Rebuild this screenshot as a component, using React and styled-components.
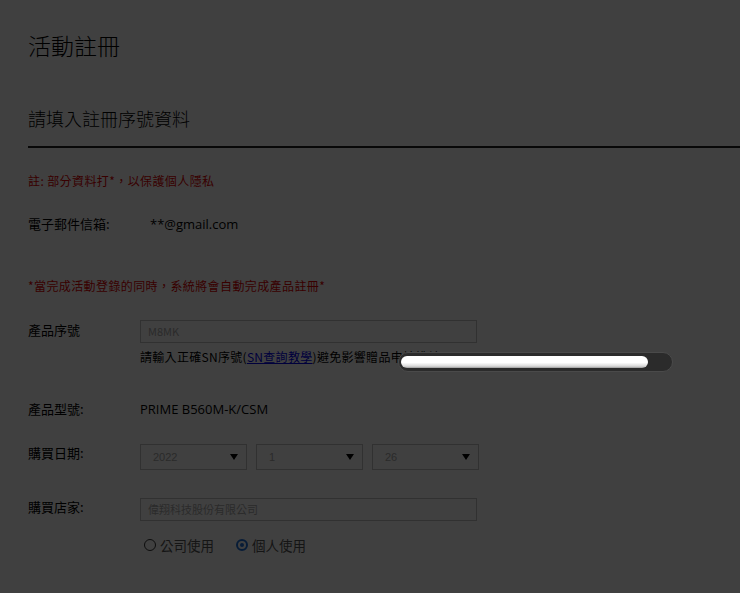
import React from "react";
import styled, { createGlobalStyle } from "styled-components";

const GlobalStyle = createGlobalStyle`
    html, body {
        margin: 0;
        padding: 0;
        background: #ffffff;
    }
    body {
        font-family: "Noto Sans CJK TC", "Noto Sans", sans-serif;
        color: #000;
    }
`;

const Page = styled.div`
    position: relative;
    width: 740px;
    height: 593px;
    overflow: hidden;
    background: #ffffff;
`;

const Content = styled.div`
    padding: 30px 0 0 28px;
`;

const Title = styled.h1`
    margin: 0;
    font-size: 23px;
    line-height: 30px;
    font-weight: 300;
`;

const SubTitle = styled.h2`
    margin: 45px 0 0;
    padding-bottom: 15px;
    font-size: 18px;
    line-height: 26px;
    font-weight: 300;
    border-bottom: 2px solid #222;
`;

const Note = styled.p`
    margin: ${props => props.$top}px 0 0;
    font-size: 12px;
    line-height: 18px;
    letter-spacing: 0.4px;
    color: #e00000;
`;

const Row = styled.div`
    display: grid;
    grid-template-columns: 112px 1fr;
    align-items: start;
    margin-top: ${props => props.$top}px;
    font-size: 13px;
`;

const Label = styled.div`
    line-height: ${props => props.$lh || 20}px;
`;

const Value = styled.div`
    line-height: 18px;
    padding-left: ${props => props.$pad || 0}px;
    font-family: "Open Sans", "Noto Sans CJK TC", sans-serif;
`;

const TextInput = styled.div`
    box-sizing: border-box;
    width: 337px;
    height: ${props => props.$h}px;
    border: 1px solid #c4c4c4;
    padding: 0 7px;
    font-size: 11px;
    line-height: ${props => props.$h - 2}px;
    color: #aaa;
`;

const Help = styled.div`
    margin: 5px 0 0 112px;
    font-size: 12px;
    line-height: 18px;
    letter-spacing: 0.3px;
    a {
        color: #0000ee;
        text-decoration: underline;
    }
`;

const Selects = styled.div`
    display: flex;
    gap: 9px;
`;

const Select = styled.div`
    box-sizing: border-box;
    width: 107px;
    height: 26px;
    border: 1px solid #c4c4c4;
    padding: 0 8px 0 12px;
    display: flex;
    align-items: center;
    justify-content: space-between;
    font-size: 11px;
    color: #aaa;
    font-family: "Liberation Sans", sans-serif;
`;

const Caret = styled.span`
    width: 0;
    height: 0;
    border-left: 4px solid transparent;
    border-right: 4px solid transparent;
    border-top: 6px solid #000;
`;

const Radios = styled.div`
    display: flex;
    gap: 22px;
    margin: 15px 0 0 116px;
    font-size: 13.5px;
    line-height: 18px;
    color: #555;
`;

const RadioItem = styled.label`
    display: flex;
    align-items: center;
    gap: 4px;
`;

const RadioDot = styled.span`
    box-sizing: border-box;
    width: 12px;
    height: 12px;
    border-radius: 50%;
    border: ${props => (props.$on ? "2px solid #1e6fd9" : "1px solid #333")};
    display: flex;
    align-items: center;
    justify-content: center;
    &::after {
        content: "";
        width: 4px;
        height: 4px;
        border-radius: 50%;
        background: ${props => (props.$on ? "#1e6fd9" : "transparent")};
    }
`;

const Overlay = styled.div`
    position: absolute;
    inset: 0;
    background: rgba(0, 0, 0, 0.75);
`;

const Loader = styled.div`
    position: absolute;
    left: 398px;
    top: 352px;
    width: 275px;
    height: 20px;
    box-sizing: border-box;
    padding: 3px 24px 3px 2px;
    border-radius: 10px;
    background: #2b2b2b;
    border: 1px solid #4a4a4a;
`;

const LoaderFill = styled.div`
    height: 100%;
    border-radius: 8px;
    background: linear-gradient(#ffffff 0%, #ffffff 55%, #d8d8d8 85%, #9a9a9a 100%);
`;

export default function App() {
    return (
        <Page>
            <GlobalStyle />
            <Content>
                <Title>活動註冊</Title>
                <SubTitle>請填入註冊序號資料</SubTitle>
                <Note $top={24}>註: 部分資料打*，以保護個人隱私</Note>
                <Row $top={25}>
                    <Label $lh={18}>電子郵件信箱:</Label>
                    <Value $pad={10}>**@gmail.com</Value>
                </Row>
                <Note $top={44}>*當完成活動登錄的同時，系統將會自動完成產品註冊*</Note>
                <Row $top={25}>
                    <Label>產品序號</Label>
                    <TextInput $h={23}>M8MK</TextInput>
                </Row>
                <Help>
                    請輸入正確SN序號(<a href="#sn">SN查詢教學</a>)避免影響贈品申請權益
                </Help>
                <Row $top={34}>
                    <Label $lh={18}>產品型號:</Label>
                    <Value>PRIME B560M-K/CSM</Value>
                </Row>
                <Row $top={26}>
                    <Label $lh={18}>購買日期:</Label>
                    <Selects>
                        <Select>2022<Caret /></Select>
                        <Select>1<Caret /></Select>
                        <Select>26<Caret /></Select>
                    </Selects>
                </Row>
                <Row $top={28}>
                    <Label $lh={18}>購買店家:</Label>
                    <TextInput $h={23}>偉翔科技股份有限公司</TextInput>
                </Row>
                <Radios>
                    <RadioItem><RadioDot />公司使用</RadioItem>
                    <RadioItem><RadioDot $on />個人使用</RadioItem>
                </Radios>
            </Content>
            <Overlay />
            <Loader>
                <LoaderFill />
            </Loader>
        </Page>
    );
}
